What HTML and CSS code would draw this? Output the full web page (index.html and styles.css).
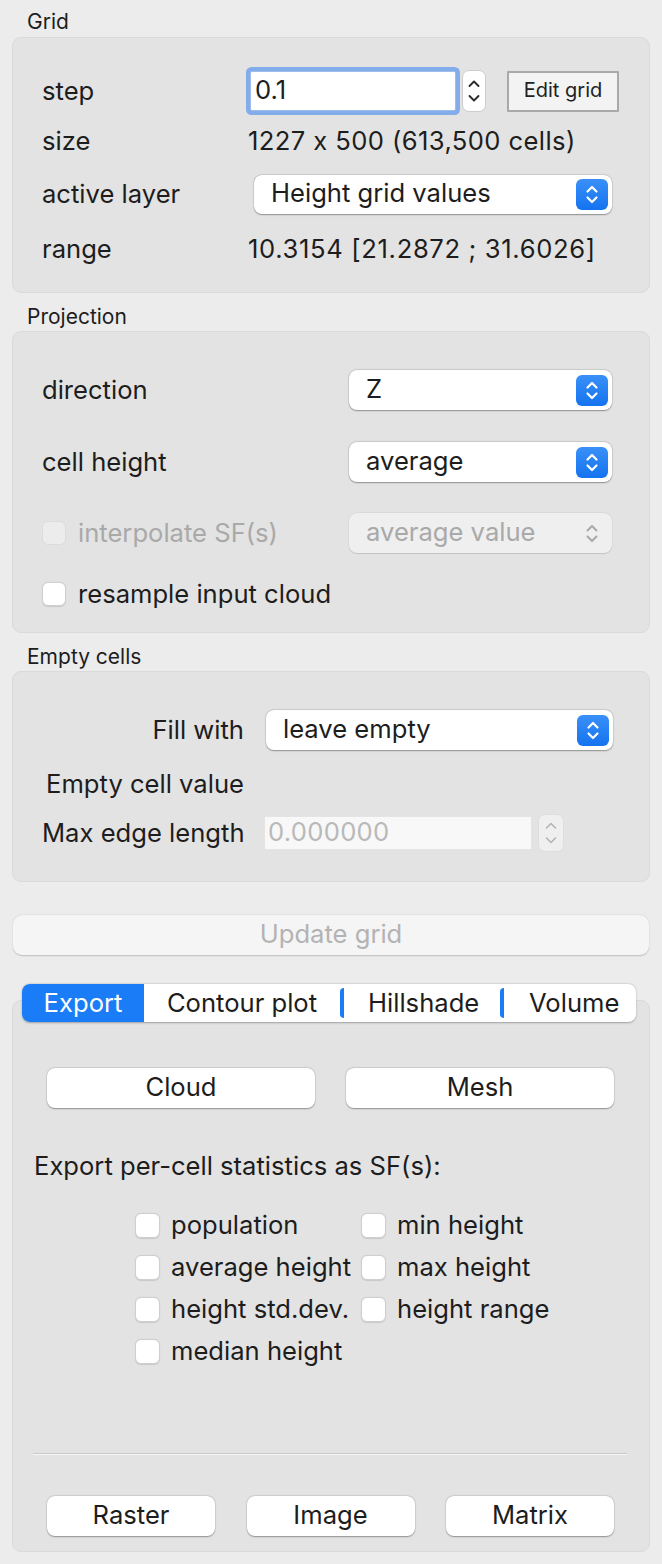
FILE: index.html
```html
<!DOCTYPE html>
<html>
<head>
<meta charset="utf-8">
<link rel="stylesheet" href="styles.css">
</head>
<body>
<div class="page">
  <div class="group-title first">Grid</div>
  <div class="group grid-group">
    <div class="row g1">
      <span class="label">step</span>
      <div class="val">
        <div class="focus-input">0.1</div>
        <div class="stepper"><svg width="24" height="42" viewBox="0 0 24 42"><path d="M7.5 16 L12 11.5 L16.5 16 M7.5 26 L12 30.5 L16.5 26" fill="none" stroke="#2a2a2a" stroke-width="1.9" stroke-linecap="round" stroke-linejoin="round"/></svg></div>
        <button class="edit-btn">Edit grid</button>
      </div>
    </div>
    <div class="row g2"><span class="label">size</span><span class="val text size-val">1227 x 500 (613,500 cells)</span></div>
    <div class="row g3"><span class="label">active layer</span>
      <div class="val"><div class="combo layer-combo"><span>Height grid values</span><span class="arrow"><svg width="32" height="31" viewBox="0 0 32 31"><path d="M11.5 12.5 L16 8 L20.5 12.5 M11.5 18.5 L16 23 L20.5 18.5" fill="none" stroke="#fff" stroke-width="2.2" stroke-linecap="round" stroke-linejoin="round"/></svg></span></div></div>
    </div>
    <div class="row g4"><span class="label">range</span><span class="val text range">10.3154 [21.2872 ; 31.6026]</span></div>
  </div>

  <div class="group-title">Projection</div>
  <div class="group proj-group">
    <div class="row p1"><span class="label">direction</span>
      <div class="combo proj-combo"><span>Z</span><span class="arrow"><svg width="32" height="31" viewBox="0 0 32 31"><path d="M11.5 12.5 L16 8 L20.5 12.5 M11.5 18.5 L16 23 L20.5 18.5" fill="none" stroke="#fff" stroke-width="2.2" stroke-linecap="round" stroke-linejoin="round"/></svg></span></div>
    </div>
    <div class="row p2"><span class="label">cell height</span>
      <div class="combo proj-combo"><span>average</span><span class="arrow"><svg width="32" height="31" viewBox="0 0 32 31"><path d="M11.5 12.5 L16 8 L20.5 12.5 M11.5 18.5 L16 23 L20.5 18.5" fill="none" stroke="#fff" stroke-width="2.2" stroke-linecap="round" stroke-linejoin="round"/></svg></span></div>
    </div>
    <div class="row p3"><span class="label check-label disabled"><span class="checkbox dis"></span>interpolate SF(s)</span>
      <div class="combo proj-combo dis-combo"><span>average value</span><span class="arrow plain"><svg width="32" height="31" viewBox="0 0 32 31"><path d="M11.5 12.5 L16 8 L20.5 12.5 M11.5 18.5 L16 23 L20.5 18.5" fill="none" stroke="#a9a9a9" stroke-width="2" stroke-linecap="round" stroke-linejoin="round"/></svg></span></div>
    </div>
    <div class="row p4"><span class="label check-label"><span class="checkbox"></span>resample input cloud</span></div>
  </div>

  <div class="group-title">Empty cells</div>
  <div class="group empty-group">
    <div class="row e1"><span class="rlabel">Fill with</span>
      <div class="combo fill-combo"><span>leave empty</span><span class="arrow"><svg width="32" height="31" viewBox="0 0 32 31"><path d="M11.5 12.5 L16 8 L20.5 12.5 M11.5 18.5 L16 23 L20.5 18.5" fill="none" stroke="#fff" stroke-width="2.2" stroke-linecap="round" stroke-linejoin="round"/></svg></span></div>
    </div>
    <div class="row e2"><span class="rlabel">Empty cell value</span></div>
    <div class="row e3"><span class="rlabel">Max edge length</span>
      <div class="val2">
        <div class="dis-input">0.000000</div>
        <div class="stepper dis-stepper"><svg width="26" height="38" viewBox="0 0 26 38"><path d="M8.5 14 L13 9.5 L17.5 14 M8.5 24 L13 28.5 L17.5 24" fill="none" stroke="#b3b3b3" stroke-width="1.6" stroke-linecap="round" stroke-linejoin="round"/></svg></div>
      </div>
    </div>
  </div>

  <button class="update-btn">Update grid</button>

  <div class="tabs-wrap">
    <div class="tabbar">
      <span class="tab active t-export">Export</span>
      <span class="tab t-contour">Contour plot</span>
      <span class="tab t-hill"><span class="mark"></span>Hillshade</span>
      <span class="tab t-vol"><span class="mark"></span>Volume</span>
    </div>
    <div class="panel">
      <div class="btn-row two">
        <button class="push">Cloud</button>
        <button class="push">Mesh</button>
      </div>
      <div class="stats-title">Export per-cell statistics as SF(s):</div>
      <div class="stats">
        <span class="check-label"><span class="checkbox"></span>population</span>
        <span class="check-label"><span class="checkbox"></span>min height</span>
        <span class="check-label"><span class="checkbox"></span>average height</span>
        <span class="check-label"><span class="checkbox"></span>max height</span>
        <span class="check-label"><span class="checkbox"></span>height std.dev.</span>
        <span class="check-label"><span class="checkbox"></span>height range</span>
        <span class="check-label"><span class="checkbox"></span>median height</span>
      </div>
      <div class="sep"></div>
      <div class="btn-row three">
        <button class="push">Raster</button>
        <button class="push">Image</button>
        <button class="push">Matrix</button>
      </div>
    </div>
  </div>
</div>
</body>
</html>
```

FILE: styles.css
```css
html, body {
  margin: 0;
  padding: 0;
  background: #ececec;
}
body {
  font-family: "Inter", "Liberation Sans", sans-serif;
  font-feature-settings: "calt" 0;
  color: #1d1d1d;
  font-size: 25.6px;
}
button { font-feature-settings: "calt" 0; }
.size-val { letter-spacing: 0.4px; }
.range { letter-spacing: 0.65px; }
.page {
  width: 662px;
  height: 1564px;
  box-sizing: border-box;
  padding: 0 12px;
  overflow: hidden;
}
.group-title {
  font-size: 21px;
  line-height: 28px;
  height: 28px;
  padding-left: 15px;
  margin-top: 10px;
  margin-bottom: 0;
}
.group-title.first {
  margin-top: 0;
  padding-top: 8px;
  margin-bottom: 1px;
}
.group {
  background: #e3e3e3;
  border: 1px solid #dadada;
  border-radius: 9px;
  box-sizing: border-box;
  width: 638px;
}
.row {
  display: flex;
  align-items: center;
}
.label, .rlabel, .text, .check-label { padding-bottom: 2px; }
.label {
  flex: none;
}
.text {
  white-space: nowrap;
}

/* Grid group */
.grid-group {
  height: 256px;
  padding: 28px 0 0 29px;
}
.grid-group .label { width: 206px; }
.g1 { height: 50px; }
.g2 { height: 50px; }
.g3 { height: 56px; }
.g4 { height: 54px; }
.val {
  display: flex;
  align-items: center;
}
.focus-input {
  width: 206px;
  height: 40px;
  box-sizing: border-box;
  margin-left: 2px;
  background: #fff;
  border: 1px solid #9dbdeb;
  border-radius: 2px;
  box-shadow: 0 0 0 4px #82acea;
  padding-left: 4px;
  line-height: 36px;
}
.stepper {
  width: 24px;
  height: 42px;
  margin-left: 6px;
  box-sizing: border-box;
  background: #fff;
  border: 1px solid #cdcdcd;
  border-radius: 7px;
  display: flex;
  align-items: center;
  justify-content: center;
  overflow: hidden;
}
.stepper svg { display: block; flex: none; }
.edit-btn {
  margin-left: 21px;
  width: 112px;
  height: 41px;
  font-family: inherit;
  font-size: 20px;
  color: #222;
  background: #f3f3f3;
  border: 2px solid #a9a9a9;
  border-radius: 1px;
  padding: 0 0 2px 0;
}
.combo {
  display: flex;
  align-items: center;
  justify-content: space-between;
  box-sizing: border-box;
  background: #fff;
  border-radius: 8px;
  box-shadow: 0 0.5px 1.5px rgba(0,0,0,0.35), 0 0 0 0.5px rgba(0,0,0,0.08);
  padding: 0 4px 0 17px;
}
.combo > span:first-child { padding-bottom: 3px; }
.combo .arrow {
  width: 32px;
  height: 31px;
  border-radius: 6px;
  background: linear-gradient(#3a90f8, #1473ef);
  display: flex;
  align-items: center;
  justify-content: center;
}
.combo .arrow svg { display: block; }
.combo .arrow.plain { background: none; }
.layer-combo {
  margin-left: 6px;
  width: 358px;
  height: 39px;
}

/* Projection */
.proj-group {
  height: 302px;
  padding: 34px 0 0 29px;
}
.proj-group .label { width: 307px; }
.p1 { height: 48px; }
.p2 { height: 48px; margin-top: 24px; }
.p3 { height: 48px; margin-top: 23px; }
.p4 { height: 48px; margin-top: 13px; }
.proj-combo {
  width: 263px;
  height: 40px;
}
.dis-combo {
  background: #efefef;
  color: #a9a9a9;
  box-shadow: 0 0.5px 1px rgba(0,0,0,0.12), 0 0 0 0.5px rgba(0,0,0,0.05);
}
.check-label {
  display: flex;
  align-items: center;
  white-space: nowrap;
}
.checkbox {
  width: 24px;
  height: 24px;
  box-sizing: border-box;
  background: #fff;
  border: 1px solid #cfcfcf;
  border-radius: 6px;
  box-shadow: 0 0.5px 1px rgba(0,0,0,0.12);
  margin-right: 12px;
  margin-top: 2px;
  flex: none;
}
.checkbox.dis {
  background: #ececec;
  border-color: #dcdcdc;
  box-shadow: none;
}
.disabled { color: #a9a9a9; }

/* Empty cells */
.empty-group {
  height: 211px;
  padding: 34px 0 0 29px;
}
.rlabel {
  width: 202px;
  text-align: right;
  flex: none;
  white-space: nowrap;
}
.e1 { height: 48px; }
.e2 { height: 60px; }
.e3 { height: 38px; }
.fill-combo {
  margin-left: 22px;
  width: 347px;
  height: 40px;
}
.val2 {
  display: flex;
  align-items: center;
  margin-left: 20px;
}
.dis-input {
  width: 268px;
  height: 34px;
  box-sizing: border-box;
  background: #f8f8f8;
  border: 1px solid #e4e4e4;
  color: #b9b9b9;
  line-height: 30px;
  padding-left: 3px;
  letter-spacing: 0.3px;
}
.dis-stepper {
  width: 26px;
  height: 38px;
  background: #efefef;
  border-color: #dedede;
}

/* Update button */
.update-btn {
  display: block;
  margin: 33px 0 0 1px;
  width: 636px;
  height: 40px;
  font-family: inherit;
  font-size: 25.6px;
  color: #b3b3b3;
  background: #f5f5f5;
  border: none;
  border-radius: 9px;
  box-shadow: 0 0.5px 1.5px rgba(0,0,0,0.2);
  padding: 0 0 3px 0;
}

/* Tabs */
.tabs-wrap {
  margin-top: 29px;
}
.tabbar {
  position: relative;
  z-index: 1;
  margin-left: 10px;
  width: 614px;
  height: 38px;
  display: flex;
  background: #fff;
  border-radius: 8px;
  box-shadow: 0 0.5px 2px rgba(0,0,0,0.3);
  overflow: hidden;
}
.tab {
  display: flex;
  align-items: center;
  justify-content: center;
  height: 38px;
  box-sizing: border-box;
  white-space: nowrap;
  padding-bottom: 2px;
}
.tab.active {
  background: #1a7cf6;
  color: #fff;
}
.t-export { width: 122px; }
.t-contour { width: 196px; }
.t-hill { width: 160px; }
.t-vol { width: 136px; }
.t-hill, .t-vol {
  justify-content: flex-start;
}
.mark {
  width: 4px;
  height: 30px;
  background: #1a7cf6;
  border-radius: 4px 0 0 4px;
  margin-right: 24px;
  margin-top: 2px;
  flex: none;
}
.t-vol .mark { margin-right: 25px; }
.panel {
  margin-top: -22px;
  height: 552px;
  width: 638px;
  box-sizing: border-box;
  background: #e3e3e3;
  border: 1px solid #dadada;
  border-radius: 9px;
  padding: 67px 35px 0 34px;
}
.btn-row {
  display: flex;
  justify-content: space-between;
}
.push {
  height: 40px;
  font-family: inherit;
  font-size: 25.6px;
  color: #1d1d1d;
  background: #fff;
  border: none;
  border-radius: 8px;
  box-shadow: 0 0.5px 1.5px rgba(0,0,0,0.35), 0 0 0 0.5px rgba(0,0,0,0.06);
  padding: 0 0 3px 0;
}
.two .push { width: 268px; }
.three .push { width: 168px; }
.stats-title {
  margin: 44px 0 0 -13px;
  height: 30px;
  line-height: 28px;
  white-space: nowrap;
}
.stats {
  margin: 22px 0 0 88px;
  display: grid;
  grid-template-columns: 226px 1fr;
  grid-auto-rows: 42px;
}
.stats .check-label { height: 42px; box-sizing: border-box; }
.stats .checkbox {
  width: 25px;
  height: 25px;
  margin-right: 11px;
}
.sep {
  margin: 81px 0 0 -14px;
  width: 594px;
  height: 1px;
  background: #c9c9c9;
  border-bottom: 1px solid #f7f7f7;
}
.three {
  margin-top: 41px;
}
```
